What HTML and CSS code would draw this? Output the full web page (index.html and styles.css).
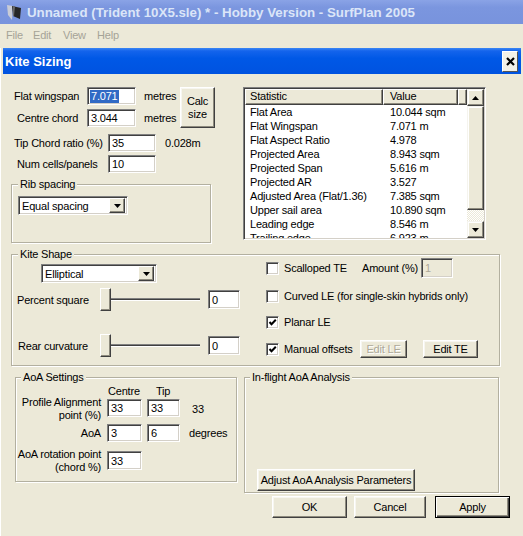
FILE: index.html
```html
<!DOCTYPE html>
<html>
<head>
<meta charset="utf-8">
<title>Kite Sizing</title>
<link rel="stylesheet" href="styles.css">
</head>
<body>
<div class="app-title">
  <svg class="app-icon" width="18" height="18" viewBox="0 0 18 18">
    <polygon points="2,2 8,3 7,17 3,12" fill="#c9ccd6"/>
    <polygon points="7,3 16,5 15,16 8,13" fill="#262626"/>
    <polygon points="8,3 10,3.5 9,13 8,13" fill="#6b6b6b"/>
  </svg>
  <span class="app-title-text">Unnamed (Trident 10X5.sle) * - Hobby Version - SurfPlan 2005</span>
</div>
<div class="menubar">
  <span class="m-file">File</span><span class="m-edit">Edit</span><span class="m-view">View</span><span class="m-help">Help</span>
</div>
<div class="dialog">
  <div class="dlg-title">
    <span class="dlg-title-text">Kite Sizing</span>
    <span class="close-btn">
      <svg width="9" height="9" viewBox="0 0 9 9"><path d="M1 1 L8 8 M8 1 L1 8" stroke="#000" stroke-width="2.2"/></svg>
    </span>
  </div>
  <div class="dlg-body">
    <div class="top-row">
      <div class="left-col">
        <div class="size-block">
          <div class="size-rows">
            <div class="frow">
              <span class="lbl lbl-fw">Flat wingspan</span>
              <span class="field w49"><span class="sel-text">7.071</span></span>
              <span class="unit">metres</span>
            </div>
            <div class="frow gap4">
              <span class="lbl lbl-cc">Centre chord</span>
              <span class="field w49">3.044</span>
              <span class="unit">metres</span>
            </div>
          </div>
          <button class="btn calc-btn">Calc<br>size</button>
        </div>
        <div class="frow frow-tc">
          <span class="lbl lbl-tc">Tip Chord ratio (%)</span>
          <span class="field w48">35</span>
          <span class="unit unit-m">0.028m</span>
        </div>
        <div class="frow frow-nc">
          <span class="lbl lbl-nc">Num cells/panels</span>
          <span class="field w48">10</span>
        </div>
        <fieldset class="group rib">
          <legend>Rib spacing</legend>
          <div class="combo combo-rib">
            <span class="combo-text">Equal spacing</span>
            <span class="combo-btn"><svg width="7" height="4" viewBox="0 0 7 4"><polygon points="0,0 7,0 3.5,4" fill="#000"/></svg></span>
          </div>
        </fieldset>
      </div>
      <div class="listview">
        <div class="lv-main">
          <div class="lv-header">
            <span class="lv-h h-stat">Statistic</span><span class="lv-h h-val">Value</span><span class="lv-h h-fill"></span>
          </div>
          <div class="lv-rows">
            <div class="lv-row"><span class="c-stat">Flat Area</span><span class="c-val">10.044 sqm</span></div>
            <div class="lv-row"><span class="c-stat">Flat Wingspan</span><span class="c-val">7.071 m</span></div>
            <div class="lv-row"><span class="c-stat">Flat Aspect Ratio</span><span class="c-val">4.978</span></div>
            <div class="lv-row"><span class="c-stat">Projected Area</span><span class="c-val">8.943 sqm</span></div>
            <div class="lv-row"><span class="c-stat">Projected Span</span><span class="c-val">5.616 m</span></div>
            <div class="lv-row"><span class="c-stat">Projected AR</span><span class="c-val">3.527</span></div>
            <div class="lv-row"><span class="c-stat">Adjusted Area (Flat/1.36)</span><span class="c-val">7.385 sqm</span></div>
            <div class="lv-row"><span class="c-stat">Upper sail area</span><span class="c-val">10.890 sqm</span></div>
            <div class="lv-row"><span class="c-stat">Leading edge</span><span class="c-val">8.546 m</span></div>
            <div class="lv-row"><span class="c-stat">Trailing edge</span><span class="c-val">6.923 m</span></div>
          </div>
        </div>
        <div class="scrollbar">
          <span class="sb-btn"><svg width="7" height="4" viewBox="0 0 7 4"><polygon points="0,4 7,4 3.5,0" fill="#000"/></svg></span>
          <span class="sb-thumb"></span>
          <span class="sb-track"></span>
          <span class="sb-btn"><svg width="7" height="4" viewBox="0 0 7 4"><polygon points="0,0 7,0 3.5,4" fill="#000"/></svg></span>
        </div>
      </div>
    </div>

    <fieldset class="group kite">
      <legend>Kite Shape</legend>
      <div class="kite-inner">
        <div class="kite-left">
          <div class="combo combo-shape">
            <span class="combo-text">Elliptical</span>
            <span class="combo-btn"><svg width="7" height="4" viewBox="0 0 7 4"><polygon points="0,0 7,0 3.5,4" fill="#000"/></svg></span>
          </div>
          <div class="srow srow-1">
            <span class="lbl lbl-ps">Percent square</span>
            <span class="slider"><span class="thumb"></span><span class="track"></span></span>
            <span class="field w32 sfield">0</span>
          </div>
          <div class="srow srow-2">
            <span class="lbl lbl-rc">Rear curvature</span>
            <span class="slider"><span class="thumb"></span><span class="track"></span></span>
            <span class="field w32 sfield">0</span>
          </div>
        </div>
        <div class="kite-right">
          <div class="kopt k1">
            <span class="chk"></span>
            <span class="klbl klbl-st">Scalloped TE</span>
            <span class="amount">Amount (%)</span>
            <span class="field w32 disabled">1</span>
          </div>
          <div class="kopt k2">
            <span class="chk"></span>
            <span class="klbl">Curved LE (for single-skin hybrids only)</span>
          </div>
          <div class="kopt k3">
            <span class="chk"><svg width="9" height="9" viewBox="0 0 9 9"><polyline points="1.5,4 3.5,6.2 7.8,1.8" fill="none" stroke="#000" stroke-width="2"/></svg></span>
            <span class="klbl">Planar LE</span>
          </div>
          <div class="kopt k4">
            <span class="chk"><svg width="9" height="9" viewBox="0 0 9 9"><polyline points="1.5,4 3.5,6.2 7.8,1.8" fill="none" stroke="#000" stroke-width="2"/></svg></span>
            <span class="klbl klbl-mo">Manual offsets</span>
            <button class="btn btn-editle" disabled>Edit LE</button>
            <button class="btn btn-editte">Edit TE</button>
          </div>
        </div>
      </div>
    </fieldset>

    <div class="bottom-groups">
      <fieldset class="group aoa">
        <legend>AoA Settings</legend>
        <div class="arow arow-head">
          <span class="acol-lbl"></span>
          <span class="acol-c head-centre">Centre</span>
          <span class="acol-t head-tip">Tip</span>
        </div>
        <div class="arow arow-pa">
          <span class="acol-lbl">Profile Alignment<br>point (%)</span>
          <span class="field w35 afield">33</span>
          <span class="field w33 afield afield-t">33</span>
          <span class="aextra extra-33">33</span>
        </div>
        <div class="arow arow-aoa">
          <span class="acol-lbl">AoA</span>
          <span class="field w35">3</span>
          <span class="field w33 afield-t">6</span>
          <span class="aextra extra-deg">degrees</span>
        </div>
        <div class="arow arow-rot">
          <span class="acol-lbl">AoA rotation point<br>(chord %)</span>
          <span class="field w35 afield afield-rot">33</span>
        </div>
      </fieldset>
      <fieldset class="group inflight">
        <legend>In-flight AoA Analysis</legend>
        <button class="btn btn-adjust">Adjust AoA Analysis Parameters</button>
      </fieldset>
    </div>

    <div class="dlg-buttons">
      <button class="btn btn-ok">OK</button>
      <button class="btn btn-cancel">Cancel</button>
      <button class="btn btn-apply">Apply</button>
    </div>
  </div>
</div>
<div class="taskstrip"></div>
</body>
</html>
```

FILE: styles.css
```css
* { box-sizing: border-box; }
html, body { margin: 0; padding: 0; }
body {
  width: 523px;
  height: 536px;
  overflow: hidden;
  background: #ece9d8;
  font-family: "Liberation Sans", Arial, sans-serif;
  font-size: 11px;
  letter-spacing: -0.2px;
  color: #000;
}

/* main window title (inactive) */
.app-title {
  height: 24px;
  background: linear-gradient(#8aa3e6, #7b96df 30%, #7893dd 100%);
  display: flex;
  align-items: center;
  letter-spacing: 0;
}
.app-icon { margin-left: 5px; flex: none; }
.app-title-text {
  margin-left: 4px;
  color: #dbe5f8;
  font-weight: bold;
  font-size: 13.3px;
  white-space: nowrap;
}

/* menu */
.menubar {
  height: 22px;
  display: flex;
  align-items: center;
  color: #a5a397;
}
.menubar span { display: block; }
.m-file { margin-left: 6px; width: 27px; }
.m-edit { width: 30px; }
.m-view { width: 34px; }

/* dialog */
.dialog {
  margin-top: 2px;
  box-shadow: inset 1px 0 0 #fff;
}
.dlg-title {
  margin-left: 3px;
  width: 518px;
  height: 26px;
  display: flex;
  align-items: center;
  justify-content: space-between;
  background: linear-gradient(#3a86f4 0, #1464ec 3px, #0058e6 40%, #0053e0 100%);
  color: #fff;
  font-weight: bold;
  font-size: 13px;
  letter-spacing: 0;
}
.dlg-title-text { margin-left: 2px; }
.close-btn {
  width: 16px;
  height: 21px;
  margin-right: 3px;
  display: flex;
  align-items: center;
  justify-content: center;
  background: #f3f1e8;
  border: 1px solid;
  border-color: #fff #555 #555 #fff;
}
.dlg-body {
  height: 458px;
  box-shadow: inset 1px 0 0 #fff;
}

/* generic controls */
.field {
  display: flex;
  align-items: center;
  height: 18px;
  padding-left: 3px;
  background: #fff;
  border: 1px solid;
  border-color: #808080 #fff #fff #808080;
  box-shadow: inset 1px 1px 0 #404040, inset -1px -1px 0 #d4d0c8;
  white-space: nowrap;
  flex: none;
}
.field.disabled { background: #ece9d8; color: #aca899; }
.w49 { width: 49px; }
.w48 { width: 48px; }
.w35 { width: 35px; }
.w33 { width: 33px; }
.w32 { width: 32px; }
.sel-text {
  background: #316ac5;
  color: #fff;
  margin-left: -1px;
  padding: 0 1px;
  line-height: 13px;
}

.btn {
  font-family: inherit;
  font-size: 11px;
  letter-spacing: -0.2px;
  color: #000;
  margin: 0;
  padding: 0;
  background: #ece9d8;
  border: 1px solid;
  border-color: #fff #404040 #404040 #fff;
  box-shadow: inset -1px -1px 0 #8e8b7e, inset 1px 1px 0 #f7f6f0;
  text-align: center;
  line-height: 13px;
  white-space: nowrap;
  flex: none;
}
.btn[disabled] { color: #aca899; text-shadow: 1px 1px 0 #fff; }

.group {
  margin: 0;
  padding: 0;
  min-width: 0;
  border: 1px solid #b3b0a0;
  box-shadow: inset 1px 1px 0 #fff, 1px 1px 0 #fff;
}
.group legend {
  padding: 0 2px;
  line-height: 13px;
  background: #ece9d8;
}

.combo {
  display: flex;
  align-items: center;
  height: 19px;
  background: #fff;
  border: 1px solid;
  border-color: #808080 #fff #fff #808080;
  box-shadow: inset 1px 1px 0 #404040, inset -1px -1px 0 #d4d0c8;
  padding: 2px 2px 2px 3px;
}
.combo-text { flex: 1; white-space: nowrap; }
.combo-btn {
  width: 16px;
  height: 15px;
  display: flex;
  align-items: center;
  justify-content: center;
  background: #ece9d8;
  border: 1px solid;
  border-color: #fff #404040 #404040 #fff;
  box-shadow: inset -1px -1px 0 #8e8b7e;
}

.lbl { white-space: nowrap; flex: none; }

/* top area */
.top-row {
  margin-top: 13px;
  display: flex;
  align-items: flex-start;
}
.left-col { width: 243px; flex: none; }
.size-block { display: flex; align-items: flex-start; }
.size-rows { width: 180px; flex: none; }
.frow { display: flex; align-items: center; height: 18px; }
.gap4 { margin-top: 4px; }
.lbl-fw { margin-left: 14px; width: 73px; }
.lbl-cc { margin-left: 17px; width: 70px; }
.unit { margin-left: 8px; white-space: nowrap; }
.calc-btn { width: 35px; height: 41px; }
.frow-tc { margin-top: 6px; }
.frow-nc { margin-top: 3px; }
.lbl-tc { margin-left: 14px; width: 94px; }
.lbl-nc { margin-left: 17px; width: 91px; }
.unit-m { margin-left: 9px; }

.rib {
  margin: 5px 0 0 11px;
  width: 200px;
  padding: 0 0 27px 6px;
}
.combo-rib { width: 110px; margin-top: 5px; }

/* list view */
.listview {
  width: 243px;
  height: 153px;
  flex: none;
  display: flex;
  border: 1px solid;
  border-color: #808080 #fff #fff #808080;
  box-shadow: inset 1px 1px 0 #404040, inset -1px -1px 0 #d4d0c8;
  padding: 1px;
  background: #fff;
}
.lv-main { width: 222px; flex: none; overflow: hidden; }
.lv-header { display: flex; height: 16px; }
.lv-h {
  height: 16px;
  background: #ece9d8;
  border: 1px solid;
  border-color: #fff #404040 #404040 #fff;
  box-shadow: inset -1px -1px 0 #8e8b7e;
  line-height: 13px;
  white-space: nowrap;
  flex: none;
}
.h-stat { width: 138px; padding-left: 4px; }
.h-val { width: 75px; padding-left: 6px; }
.h-fill { width: 9px; }
.lv-row { display: flex; height: 14px; line-height: 14px; white-space: nowrap; }
.c-stat { width: 138px; padding-left: 5px; flex: none; }
.c-val { padding-left: 7px; }

.scrollbar {
  width: 17px;
  flex: none;
  display: flex;
  flex-direction: column;
}
.sb-btn {
  height: 17px;
  flex: none;
  display: flex;
  align-items: center;
  justify-content: center;
  background: #ece9d8;
  border: 1px solid;
  border-color: #f5f4ee #404040 #404040 #f5f4ee;
  box-shadow: inset -1px -1px 0 #8e8b7e, inset 1px 1px 0 #fff;
}
.sb-thumb {
  height: 104px;
  flex: none;
  background: #ece9d8;
  border: 1px solid;
  border-color: #f5f4ee #404040 #404040 #f5f4ee;
  box-shadow: inset -1px -1px 0 #8e8b7e, inset 1px 1px 0 #fff;
}
.sb-track {
  flex: 1;
  background: repeating-conic-gradient(#fff 0 25%, #ece9d8 0 50%) 0 0 / 2px 2px;
}

/* kite shape */
.kite {
  margin: 5px 0 0 11px;
  width: 489px;
  padding: 0 0 6px 0;
}
.kite legend { margin-left: 6px; }
.kite-inner { display: flex; align-items: flex-start; }
.kite-left { width: 254px; flex: none; }
.combo-shape { width: 116px; margin: 3px 0 0 29px; }
.srow { display: flex; align-items: center; height: 23px; }
.srow-1 { margin-top: 5px; }
.srow-2 { margin-top: 23px; }
.lbl-ps { margin-left: 5px; width: 83px; }
.lbl-rc { margin-left: 6px; width: 82px; }
.slider { width: 100px; height: 23px; display: flex; align-items: center; flex: none; }
.thumb {
  width: 11px;
  height: 23px;
  flex: none;
  background: #ece9d8;
  border: 1px solid;
  border-color: #fff #404040 #404040 #fff;
  box-shadow: inset -1px -1px 0 #8e8b7e;
}
.track {
  flex: 1;
  height: 3px;
  border-top: 1px solid #808080;
  border-bottom: 1px solid #fff;
  background: #404040;
  background-clip: content-box;
}
.sfield { margin-left: 8px; height: 19px; }

.kite-right { flex: 1; }
.kopt { display: flex; align-items: center; height: 20px; }
.k1 { margin-top: -3px; }
.k2 { margin-top: 8px; }
.k3 { margin-top: 6px; }
.k4 { margin-top: 7px; }
.chk {
  width: 13px;
  height: 13px;
  flex: none;
  display: flex;
  align-items: center;
  justify-content: center;
  background: #fff;
  border: 1px solid;
  border-color: #808080 #fff #fff #808080;
  box-shadow: inset 1px 1px 0 #404040, inset -1px -1px 0 #d4d0c8;
}
.klbl { margin-left: 5px; white-space: nowrap; }
.klbl-st { width: 78px; flex: none; }
.amount { width: 59px; flex: none; white-space: nowrap; }
.k1 .field { height: 20px; }
.klbl-mo { width: 76px; flex: none; }
.btn-editle { width: 47px; height: 18px; }
.btn-editte { width: 55px; height: 18px; margin-left: 16px; }

/* bottom groups */
.bottom-groups {
  margin-top: 5px;
  display: flex;
  align-items: flex-start;
}
.aoa {
  margin-left: 15px;
  width: 222px;
  padding: 0 0 7px 0;
}
.aoa legend { margin-left: 5px; }
.arow { display: flex; }
.arow-head { height: 13px; align-items: center; }
.acol-lbl {
  width: 91px;
  flex: none;
  padding-right: 6px;
  text-align: right;
  line-height: 13px;
  white-space: nowrap;
}
.acol-c { width: 40px; flex: none; padding-left: 1px; }
.acol-t { padding-left: 9px; }
.arow-pa { margin-top: -1px; align-items: flex-start; height: 26px; }
.afield { margin-top: 3px; }
.afield-t { margin-left: 5px; }
.aextra { white-space: nowrap; align-self: center; }
.extra-33 { margin-left: 12px; }
.arow-aoa { margin-top: 2px; align-items: center; height: 18px; }
.extra-deg { margin-left: 9px; }
.arow-rot { margin-top: 6px; align-items: flex-start; height: 26px; }
.afield-rot { height: 19px; }

.inflight {
  margin-left: 7px;
  width: 255px;
  padding: 0 0 1px 0;
}
.inflight legend { margin-left: 5px; }
.btn-adjust { width: 158px; height: 22px; margin: 85px 0 0 12px; display: block; }

.dlg-buttons {
  margin-top: 3px;
  display: flex;
}
.btn-ok { margin-left: 272px; width: 75px; height: 22px; }
.btn-cancel { margin-left: 7px; width: 72px; height: 22px; }
.btn-apply {
  margin-left: 9px;
  width: 75px;
  height: 22px;
  border-color: #000;
  box-shadow: inset 1px 1px 0 #fff, inset -1px -1px 0 #404040, inset -2px -2px 0 #8e8b7e;
}

.taskstrip {
  height: 4px;
  background: linear-gradient(#6d86a3, #4a6587);
}
```
